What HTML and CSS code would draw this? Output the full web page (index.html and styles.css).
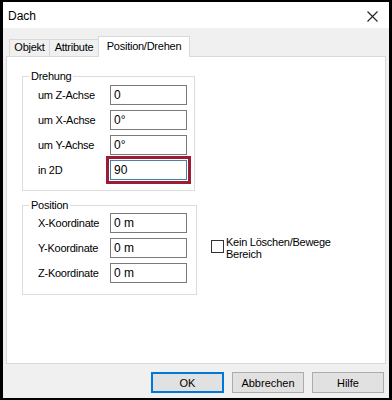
FILE: index.html
```html
<!DOCTYPE html>
<html lang="de">
<head>
  <meta charset="UTF-8" />
  <meta name="viewport" content="width=device-width, initial-scale=1.0" />
  <title>Dach</title>
  <link rel="stylesheet" href="styles.css">
</head>
<body>
  <div class="window">
    <div class="titlebar">
      <span class="title">Dach</span>
      <svg class="close" width="11" height="11" viewBox="0 0 11 11">
        <path d="M0.5 0.5 L10.5 10.5 M10.5 0.5 L0.5 10.5" stroke="#222" stroke-width="1.1" fill="none"/>
      </svg>
    </div>
    <div class="content">
      <div class="tabs">
        <div class="tab tab-objekt">Objekt</div>
        <div class="tab tab-attr">Attribute</div>
        <div class="tab tab-pos active">Position/Drehen</div>
      </div>
      <div class="panel">
        <fieldset class="group group-rot">
          <legend>Drehung</legend>
          <div class="rows">
            <label>um Z-Achse</label><input type="text" value="0">
            <label>um X-Achse</label><input type="text" value="0°">
            <label>um Y-Achse</label><input type="text" value="0°">
            <label>in 2D</label><input type="text" class="marked" value="90">
          </div>
        </fieldset>
        <div class="pos-row">
          <fieldset class="group group-pos">
            <legend>Position</legend>
            <div class="rows">
              <label>X-Koordinate</label><input type="text" value="0 m">
              <label>Y-Koordinate</label><input type="text" value="0 m">
              <label>Z-Koordinate</label><input type="text" value="0 m">
            </div>
          </fieldset>
          <div class="check">
            <span class="box"></span>
            <span class="check-text">Kein Löschen/Bewege Bereich</span>
          </div>
        </div>
      </div>
      <div class="buttons">
        <button class="btn default">OK</button>
        <button class="btn">Abbrechen</button>
        <button class="btn">Hilfe</button>
      </div>
    </div>
  </div>
</body>
</html>
```

FILE: styles.css
```css
body { margin: 0; background: #000; font-family: 'Liberation Sans', Arial, sans-serif; font-size: 11px; letter-spacing: -0.25px; color: #000; }
.window { width: 386px; height: 396px; margin: 2px 3px 0 3px; background: #f0f0f0; }
.titlebar { height: 26px; background: #fff; display: flex; align-items: center; justify-content: space-between; padding: 2px 11px 0 5px; box-sizing: border-box; }
.title { font-size: 12px; letter-spacing: 0; }
.content { padding: 8px 3px 0 3px; }
.tabs { display: flex; align-items: flex-end; height: 20px; padding-left: 3px; position: relative; z-index: 1; }
.tab { box-sizing: border-box; height: 17px; line-height: 15px; border: 1px solid #d9d9d9; border-bottom: none; background: #f0f0f0; text-align: center; margin-right: -1px; }
.tab-objekt { width: 41px; }
.tab-attr { width: 50px; }
.tab.active { width: 92px; height: 21px; line-height: 19px; margin-bottom: -1px; background: #fff; }
.panel { box-sizing: border-box; height: 308px; background: #fff; border: 1px solid #d9d9d9; }
.group { margin: 13px 0 0 15px; padding: 2px 0 10px 0; border: 1px solid #dcdcdc; min-width: 0; box-sizing: border-box; }
.group legend { padding: 0 2px; margin-left: 6px; line-height: 13px; }
.group-rot { width: 173px; }
.group-pos { width: 175px; margin-top: 8px; padding-top: 1px; padding-bottom: 11px; }
.rows { display: grid; grid-template-columns: 72px 77px; row-gap: 5px; align-items: center; padding-left: 15px; }
.rows input { box-sizing: border-box; width: 77px; height: 20px; border: 1px solid #7a7a7a; padding: 0 3px; font: inherit; font-size: 12px; letter-spacing: 0; color: #000; background: #fff; margin: 0; }
.rows input.marked { border-color: #3f86a6; outline: 3px solid #9b1c34; outline-offset: 1px; }
.pos-row { display: flex; align-items: center; }
.check { display: flex; align-items: flex-start; margin-left: 14px; padding-top: 14px; }
.box { width: 13px; height: 13px; box-sizing: border-box; border: 1px solid #333; background: #fff; }
.check-text { width: 112px; margin-left: 2px; line-height: 12px; margin-top: -4px; }
.buttons { display: flex; justify-content: flex-end; gap: 8px; padding: 8px 2px 0 0; }
.btn { box-sizing: border-box; width: 72px; height: 21px; background: #e1e1e1; border: 1px solid #adadad; font: inherit; color: #000; padding: 0; }
.btn.default { width: 73px; border-color: #0078d7; box-shadow: inset 0 0 0 1px #0078d7; }
```
